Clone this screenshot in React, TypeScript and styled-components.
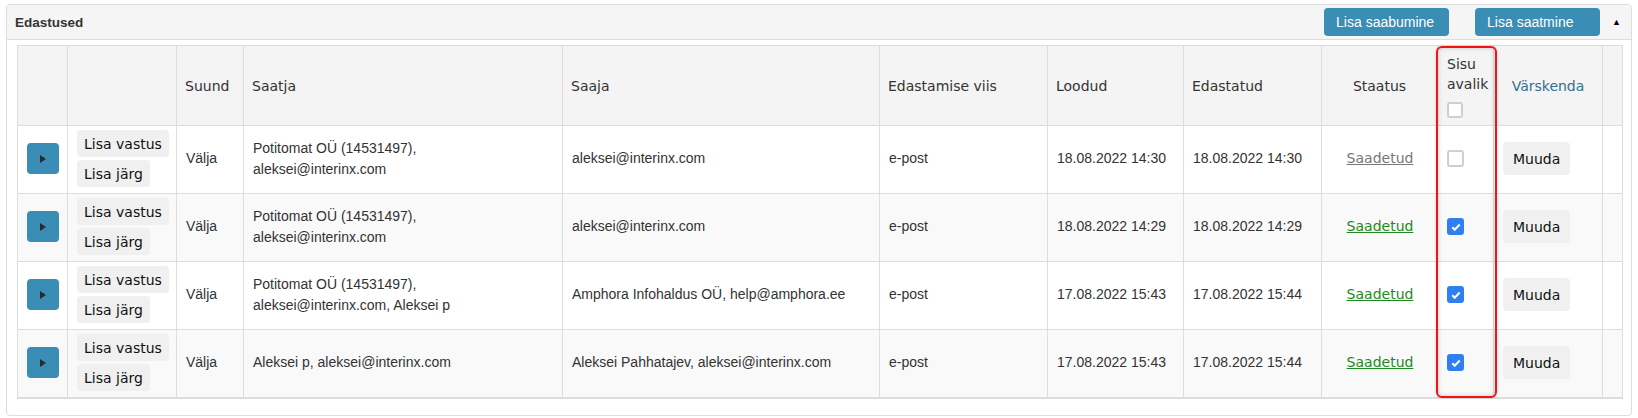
import React from 'react';
import styled, { createGlobalStyle } from 'styled-components';

const GlobalStyle = createGlobalStyle`
  html, body { margin: 0; padding: 0; background: #fff; }
  body { font-family: "Liberation Sans", Arial, sans-serif; color: #333; }
`;

const Page = styled.div`
  padding: 4px 6px;
`;

const Panel = styled.section`
  border: 1px solid #ddd;
  border-radius: 4px;
  background: #fff;
  padding-bottom: 16px;
`;

const PanelHeader = styled.div`
  display: flex;
  align-items: center;
  height: 34px;
  padding: 0 10px 0 8px;
  background: #f5f5f5;
  border-bottom: 1px solid #ddd;
  border-radius: 4px 4px 0 0;
`;

const PanelTitle = styled.h3`
  flex: 1;
  margin: 0;
  font-family: "Liberation Sans", Arial, sans-serif;
  font-size: 13.5px;
  font-weight: bold;
  color: #333;
`;

const HeaderActions = styled.div`
  display: flex;
  align-items: center;
  gap: 26px;
  margin-top: -1px;
`;

const PrimaryButton = styled.button`
  width: 125px;
  height: 28px;
  padding: 0 0 0 12px;
  text-align: left;
  border: none;
  border-radius: 4px;
  background: #3a8db5;
  color: #fff;
  font-family: "Liberation Sans", Arial, sans-serif;
  font-size: 14px;
  cursor: pointer;
`;

const CollapseToggle = styled.button`
  margin-left: 4px;
  padding: 0 0 0 8px;
  border: none;
  background: transparent;
  font-size: 9px;
  color: #000;
  cursor: pointer;
`;

const PanelBody = styled.div`
  padding: 5px 10px 0 10px;
`;

const TableWrap = styled.div`
  position: relative;
`;

const Table = styled.table`
  width: 1605px;
  table-layout: fixed;
  border-collapse: collapse;
  border: 1px solid #ddd;
  border-bottom: 2px solid #ddd;

  tbody tr:nth-child(even) { background: #f9f9f9; }
`;

const Th = styled.th<{ $align?: 'left' | 'center'; $color?: string }>`
  height: 79px;
  padding: 0 8px;
  border: 1px solid #ddd;
  background: #f4f4f4;
  text-align: ${({ $align }) => $align || 'left'};
  vertical-align: middle;
  font-family: "DejaVu Sans", Verdana, sans-serif;
  font-size: 14px;
  font-weight: normal;
  line-height: 20px;
  color: ${({ $color }) => $color || '#333'};
`;

const SisuHeader = styled(Th)`
  height: 71px;
  padding: 8px 8px 0 9px;
  vertical-align: top;
`;

const Td = styled.td<{ $align?: 'left' | 'center' }>`
  height: 61px;
  padding: 2px 8px 4px 9px;
  border: 1px solid #ddd;
  text-align: ${({ $align }) => $align || 'left'};
  vertical-align: middle;
  font-size: 14px;
  line-height: 21px;
  color: #333;
`;

const ExpandButton = styled.button`
  display: flex;
  align-items: center;
  justify-content: center;
  width: 32px;
  height: 31px;
  margin: 0 auto;
  padding: 0;
  border: none;
  border-radius: 4px;
  background: #3a8db5;
  cursor: pointer;
`;

const ButtonStack = styled.div`
  display: flex;
  flex-direction: column;
  align-items: flex-start;
  gap: 3px;
`;

const LightButton = styled.button<{ $tall?: boolean }>`
  display: inline-block;
  height: ${({ $tall }) => ($tall ? '33px' : '27px')};
  margin: 0;
  padding: 0 ${({ $tall }) => ($tall ? '10px' : '7px')};
  border: none;
  border-radius: 4px;
  background: #f0f0f0;
  white-space: nowrap;
  font-family: "DejaVu Sans", Verdana, sans-serif;
  font-size: 14px;
  color: #111;
  cursor: pointer;
`;

const StatusLink = styled.a<{ $sent: boolean }>`
  font-family: "DejaVu Sans", Verdana, sans-serif;
  font-size: 14px;
  color: ${({ $sent }) => ($sent ? '#1d8a1d' : '#777')};
  text-decoration: underline;
`;

const Check = styled.input`
  appearance: none;
  box-sizing: border-box;
  display: block;
  width: 17px;
  height: 17px;
  margin: 0;
  border: 2px solid #cfcfcf;
  border-radius: 3px;
  background: #fff;
  cursor: pointer;

  &:checked {
    border-color: #2f7ff2;
    background: #2f7ff2 url("data:image/svg+xml,%3Csvg xmlns='http://www.w3.org/2000/svg' viewBox='0 0 12 12'%3E%3Cpath d='M2.3 6.3l2.4 2.4 5-5.2' fill='none' stroke='white' stroke-width='2'/%3E%3C/svg%3E") center / 12px 12px no-repeat;
  }
`;

const HeaderCheck = styled(Check)`
  margin-top: 8px;
  width: 16px;
  height: 16px;
`;

const Highlight = styled.div`
  position: absolute;
  top: 1px;
  bottom: 1px;
  left: 1419px;
  width: 57px;
  border: 2px solid #f01414;
  border-radius: 6px;
  box-shadow: inset 0 0 5px rgba(0, 0, 0, 0.18), 0 0 3px rgba(0, 0, 0, 0.15);
  pointer-events: none;
`;

const colWidths = [50, 109, 67, 319, 317, 168, 136, 138, 116, 56, 109, 20];

type Row = {
  sender: string[];
  receiver: string;
  created: string;
  sent: string;
  delivered: boolean;
  selected: boolean;
};

const rows: Row[] = [
  {
    sender: ['Potitomat OÜ (14531497),', 'aleksei@interinx.com'],
    receiver: 'aleksei@interinx.com',
    created: '18.08.2022 14:30',
    sent: '18.08.2022 14:30',
    delivered: false,
    selected: false,
  },
  {
    sender: ['Potitomat OÜ (14531497),', 'aleksei@interinx.com'],
    receiver: 'aleksei@interinx.com',
    created: '18.08.2022 14:29',
    sent: '18.08.2022 14:29',
    delivered: true,
    selected: true,
  },
  {
    sender: ['Potitomat OÜ (14531497),', 'aleksei@interinx.com, Aleksei p'],
    receiver: 'Amphora Infohaldus OÜ, help@amphora.ee',
    created: '17.08.2022 15:43',
    sent: '17.08.2022 15:44',
    delivered: true,
    selected: true,
  },
  {
    sender: ['Aleksei p, aleksei@interinx.com'],
    receiver: 'Aleksei Pahhatajev, aleksei@interinx.com',
    created: '17.08.2022 15:43',
    sent: '17.08.2022 15:44',
    delivered: true,
    selected: true,
  },
];

const PlayIcon = () => (
  <svg width="6" height="8" viewBox="0 0 6 8">
    <path d="M0 0 L6 4 L0 8 Z" fill="#2b2b2b" />
  </svg>
);

export default function App() {
  return (
    <Page>
      <GlobalStyle />
      <Panel>
        <PanelHeader>
          <PanelTitle>Edastused</PanelTitle>
          <HeaderActions>
            <PrimaryButton>Lisa saabumine</PrimaryButton>
            <PrimaryButton>Lisa saatmine</PrimaryButton>
          </HeaderActions>
          <CollapseToggle>▲</CollapseToggle>
        </PanelHeader>
        <PanelBody>
          <TableWrap>
            <Table>
              <colgroup>
                {colWidths.map((w, i) => (
                  <col key={i} style={{ width: w }} />
                ))}
              </colgroup>
              <thead>
                <tr>
                  <Th />
                  <Th />
                  <Th>Suund</Th>
                  <Th>Saatja</Th>
                  <Th>Saaja</Th>
                  <Th>Edastamise viis</Th>
                  <Th>Loodud</Th>
                  <Th>Edastatud</Th>
                  <Th $align="center">Staatus</Th>
                  <SisuHeader>
                    Sisu
                    <br />
                    avalik
                    <HeaderCheck type="checkbox" />
                  </SisuHeader>
                  <Th $align="center" $color="#31708f">Värskenda</Th>
                  <Th />
                </tr>
              </thead>
              <tbody>
                {rows.map((r, i) => (
                  <tr key={i}>
                    <Td>
                      <ExpandButton>
                        <PlayIcon />
                      </ExpandButton>
                    </Td>
                    <Td>
                      <ButtonStack>
                        <LightButton>Lisa vastus</LightButton>
                        <LightButton>Lisa järg</LightButton>
                      </ButtonStack>
                    </Td>
                    <Td>Välja</Td>
                    <Td>
                      {r.sender.map((line, j) => (
                        <div key={j}>{line}</div>
                      ))}
                    </Td>
                    <Td>{r.receiver}</Td>
                    <Td>e-post</Td>
                    <Td>{r.created}</Td>
                    <Td>{r.sent}</Td>
                    <Td $align="center">
                      <StatusLink href="#" $sent={r.delivered}>Saadetud</StatusLink>
                    </Td>
                    <Td>
                      <Check type="checkbox" defaultChecked={r.selected} />
                    </Td>
                    <Td>
                      <LightButton $tall>Muuda</LightButton>
                    </Td>
                    <Td />
                  </tr>
                ))}
              </tbody>
            </Table>
            <Highlight />
          </TableWrap>
        </PanelBody>
      </Panel>
    </Page>
  );
}
